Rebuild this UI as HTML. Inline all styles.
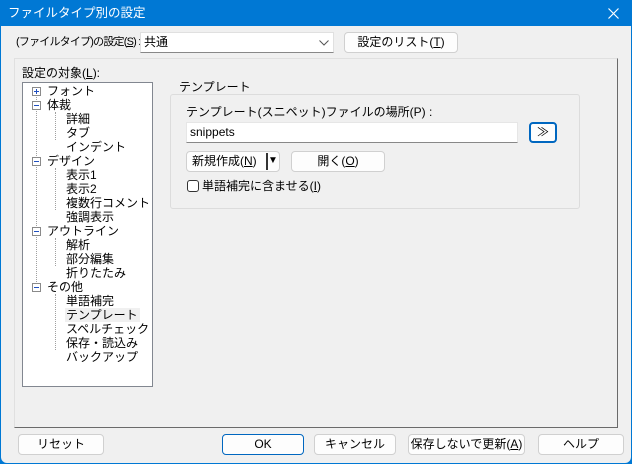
<!DOCTYPE html>
<html><head><meta charset="utf-8"><style>
*{box-sizing:border-box;margin:0;padding:0}
body{width:632px;height:464px;overflow:hidden;background:#0078d4;font-family:"Liberation Sans","Noto Sans CJK JP",sans-serif;font-size:12px;color:#000;position:relative}
.win{position:absolute;left:1px;top:26px;width:630px;height:437px;background:#f0f0f0;border-radius:0 0 6px 6px}
.a{position:absolute;white-space:nowrap;line-height:14px}
.btn{position:absolute;height:21px;background:#fdfdfd;border:1px solid #d0d0d0;border-radius:4px;text-align:center;line-height:19px}
.tree div{position:absolute;white-space:nowrap;line-height:14px}
.exp{position:absolute;width:9px;height:9px;border:1px solid #8a8a8a;background:#fff}
.exp:after{content:"";position:absolute;left:1px;top:3px;width:5px;height:1px;background:#2050c0}
.plus:before{content:"";position:absolute;left:3px;top:1px;width:1px;height:5px;background:#2050c0}
</style></head><body>
<div class="a" style="left:8px;top:6px;color:#fff;font-size:12.5px">ファイルタイプ別の設定</div>
<svg style="position:absolute;left:608px;top:8px" width="11" height="11"><path d="M0.5 0.5L10.5 10.5M10.5 0.5L0.5 10.5" stroke="#fff" stroke-width="1.2"/></svg>
<div class="win"></div>
<div class="a" style="left:16px;top:35px;font-size:11px;letter-spacing:-0.8px">(ファイルタイプ)の設定(<u>S</u>) :</div>
<div style="position:absolute;left:140px;top:32px;width:194px;height:21px;background:#fff;border:1px solid #e0e0e0;border-bottom-color:#888"></div>
<div class="a" style="left:144px;top:35px">共通</div>
<svg style="position:absolute;left:319px;top:40px" width="10" height="6"><path d="M0.5 0.5L5 5L9.5 0.5" stroke="#555" fill="none"/></svg>
<div class="btn" style="left:344px;top:32px;width:114px">設定のリスト(<u>T</u>)</div>
<div style="position:absolute;left:14px;top:58px;width:604px;height:370px;border:1px solid #fff;border-top-color:#e0e0e0;border-left-color:#e0e0e0;border-right-color:#6a6a6a;border-bottom-color:#6a6a6a"></div>
<div class="a" style="left:22px;top:66px">設定の対象(<u>L</u>):</div>
<div style="position:absolute;left:22px;top:82px;width:131px;height:305px;background:#fff;border:1px solid #828790"></div>
<div class="tree">
<div style="left:36px;top:95px;width:0;height:197px;border-left:1px dotted #a0a0a0"></div>
<div style="left:55px;top:112px;height:28px;border-left:1px dotted #a0a0a0"></div>
<div style="left:55px;top:168px;height:42px;border-left:1px dotted #a0a0a0"></div>
<div style="left:55px;top:238px;height:28px;border-left:1px dotted #a0a0a0"></div>
<div style="left:55px;top:294px;height:56px;border-left:1px dotted #a0a0a0"></div>
<div class="exp plus" style="left:32px;top:87px"></div>
<div class="exp" style="left:32px;top:101px"></div>
<div class="exp" style="left:32px;top:157px"></div>
<div class="exp" style="left:32px;top:227px"></div>
<div class="exp" style="left:32px;top:283px"></div>
<div style="left:47px;top:84px">フォント</div>
<div style="left:47px;top:98px">体裁</div>
<div style="left:66px;top:112px">詳細</div>
<div style="left:66px;top:126px">タブ</div>
<div style="left:66px;top:140px">インデント</div>
<div style="left:47px;top:154px">デザイン</div>
<div style="left:66px;top:168px">表示1</div>
<div style="left:66px;top:182px">表示2</div>
<div style="left:66px;top:196px">複数行コメント</div>
<div style="left:66px;top:210px">強調表示</div>
<div style="left:47px;top:224px">アウトライン</div>
<div style="left:66px;top:238px">解析</div>
<div style="left:66px;top:252px">部分編集</div>
<div style="left:66px;top:266px">折りたたみ</div>
<div style="left:47px;top:280px">その他</div>
<div style="left:66px;top:294px">単語補完</div>
<div style="left:65px;top:308px;background:#f0f0f0;padding:0 2px 0 1px">テンプレート</div>
<div style="left:66px;top:322px">スペルチェック</div>
<div style="left:66px;top:336px">保存・読込み</div>
<div style="left:66px;top:350px">バックアップ</div>
</div>
<div style="position:absolute;left:170px;top:94px;width:410px;height:115px;border:1px solid #dcdcdc;border-radius:3px"></div>
<div class="a" style="left:176px;top:80px;background:#f0f0f0;padding:0 3px">テンプレート</div>
<div class="a" style="left:186px;top:105px">テンプレート(スニペット)ファイルの場所(P) :</div>
<div style="position:absolute;left:186px;top:122px;width:332px;height:21px;background:#fff;border:1px solid #e6e6e6;border-bottom-color:#888"></div>
<div class="a" style="left:190px;top:125px">snippets</div>
<div class="btn" style="left:529px;top:122px;width:28px;border:2px solid #0067c0;line-height:16px">≫</div>
<div class="btn" style="left:186px;top:151px;width:94px;text-align:left;padding-left:5px">新規作成(<u>N</u>)</div>
<div style="position:absolute;left:266px;top:153px;width:2px;height:17px;background:#333"></div>
<div class="a" style="left:268px;top:154px;font-size:10px">▼</div>
<div class="btn" style="left:291px;top:151px;width:94px">開く(<u>O</u>)</div>
<div style="position:absolute;left:187px;top:180px;width:12px;height:12px;border:1px solid #333;border-radius:3px;background:#fff"></div>
<div class="a" style="left:202px;top:179px">単語補完に含ませる(<u>I</u>)</div>
<div class="btn" style="left:18px;top:434px;width:86px">リセット</div>
<div class="btn" style="left:222px;top:434px;width:82px;border-color:#0067c0">OK</div>
<div class="btn" style="left:314px;top:434px;width:82px">キャンセル</div>
<div class="btn" style="left:408px;top:434px;width:117px">保存しないで更新(<u>A</u>)</div>
<div class="btn" style="left:538px;top:434px;width:86px">ヘルプ</div>
</body></html>
